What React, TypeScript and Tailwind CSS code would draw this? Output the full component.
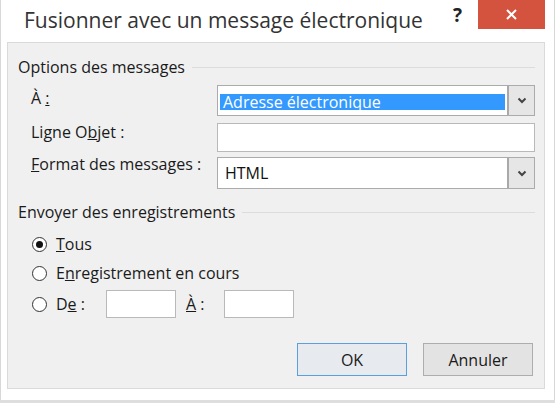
import type { ReactNode } from 'react'

function Chevron() {
  return (
    <svg width="10" height="7" viewBox="0 0 10 7" fill="none">
      <path d="M1.5 1.5 L5 5 L8.5 1.5" stroke="#444" strokeWidth="2" />
    </svg>
  )
}

function DropButton() {
  return (
    <div className="flex w-[27px] shrink-0 items-center justify-center border-l-2 border-[#a9a9a9] bg-[#e6e6e6]">
      <Chevron />
    </div>
  )
}

function Circle({ checked }: { checked?: boolean }) {
  return (
    <span className="flex h-[15px] w-[15px] shrink-0 items-center justify-center rounded-full border border-[#333] bg-white">
      {checked && <span className="h-[7px] w-[7px] rounded-full bg-[#111]" />}
    </span>
  )
}

function GroupTitle({ children }: { children: ReactNode }) {
  return (
    <div className="flex h-[20px] items-center pl-[10px] pr-[9px]">
      <span className="leading-[20px]">{children}</span>
      <div className="ml-[7px] h-px flex-1 bg-[#dcdcdc]" />
    </div>
  )
}

export default function App() {
  return (
    <div className="h-[403px] w-[555px] bg-[#dedede] font-['Open_Sans',sans-serif] text-[16px] text-[#1a1a1a]">
      <div className="flex h-[400px] flex-col border-x border-[#d8d8d8] bg-white">
        {/* title bar */}
        <div className="flex h-[42px] items-start">
          <div className="pl-[23px] pt-[6px] text-[21px] leading-[28px] text-[#333]">
            Fusionner avec un message électronique
          </div>
          <div className="ml-auto pt-[3px] text-[19px] font-bold leading-[24px] text-[#222]">?</div>
          <div className="ml-[16px] mr-[9px] flex h-[29px] w-[67px] items-center justify-center bg-[#d4533f]">
            <svg width="11" height="11" viewBox="0 0 11 11">
              <path d="M1 1 L10 10 M10 1 L1 10" stroke="white" strokeWidth="2" />
            </svg>
          </div>
        </div>

        {/* panel */}
        <div className="ml-[6px] mr-[9px] flex h-[347px] flex-col border border-[#dadada] bg-[#f0f0f0] pt-[14px]">
          <GroupTitle>Options des messages</GroupTitle>

          <div className="mt-[8px] flex h-[31px] items-start pl-[23px] pr-[9px]">
            <span className="mt-[3px] w-[186px] leading-[20px]">
              À <u>:</u>
            </span>
            <div className="flex h-full flex-1 border border-[#ababab] bg-white">
              <div className="flex flex-1 items-center px-[2px]">
                <span className="mt-[2px] h-[16px] w-full bg-[#3399ff] pl-[3px] leading-[16px] text-white">
                  Adresse électronique
                </span>
              </div>
              <DropButton />
            </div>
          </div>

          <div className="mt-[7px] flex h-[29px] items-start pl-[23px] pr-[9px]">
            <span className="-mt-[1px] w-[186px] leading-[20px]">
              Ligne O<u>b</u>jet :
            </span>
            <div className="h-full flex-1 border border-[#b9b9b9] bg-white" />
          </div>

          <div className="mt-[5px] flex h-[32px] items-start pl-[23px] pr-[9px]">
            <span className="-mt-[3px] w-[186px] leading-[20px]">
              <u>F</u>ormat des messages :
            </span>
            <div className="flex h-full flex-1 border border-[#ababab] bg-white">
              <div className="flex flex-1 items-center pl-[7px] leading-[20px] text-[#111]">HTML</div>
              <DropButton />
            </div>
          </div>

          <div className="mt-[13px]">
            <GroupTitle>Envoyer des enregistrements</GroupTitle>
          </div>

          <div className="mt-[12px] flex h-[20px] items-center pl-[24px]">
            <Circle checked />
            <span className="ml-[9px] leading-[20px]">
              <u>T</u>ous
            </span>
          </div>
          <div className="mt-[9px] flex h-[20px] items-center pl-[24px]">
            <Circle />
            <span className="ml-[9px] leading-[20px]">
              E<u>n</u>registrement en cours
            </span>
          </div>
          <div className="mt-[7px] flex h-[28px] items-center pl-[24px]">
            <Circle />
            <span className="ml-[9px] w-[50px] leading-[20px]">
              D<u>e</u> :
            </span>
            <div className="h-full w-[70px] border border-[#b9b9b9] bg-white" />
            <span className="ml-[10px] w-[38px] leading-[20px]">
              <u>À</u> :
            </span>
            <div className="h-full w-[70px] border border-[#b9b9b9] bg-white" />
          </div>

          <div className="mt-[25px] flex h-[33px] justify-end gap-[16px] pr-[11px]">
            <button
              type="button"
              className="w-[110px] border border-[#5c9ee0] bg-[#e7eaee] text-[#1a1a1a]"
            >
              OK
            </button>
            <button
              type="button"
              className="w-[110px] border border-[#adadad] bg-[#e3e3e3] text-[#1a1a1a]"
            >
              Annuler
            </button>
          </div>
        </div>
      </div>
    </div>
  )
}
